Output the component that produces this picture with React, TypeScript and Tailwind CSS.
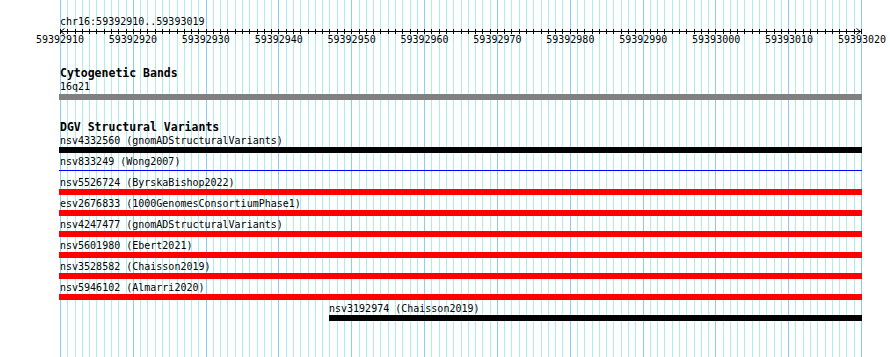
import React from "react";

// 110 bases between x=60 and x=861
const baseX = (i: number) => Math.round(60 + (i * 801) / 110);

const ticks = Array.from({ length: 111 }, (_, i) => i);
const labels = Array.from({ length: 12 }, (_, i) => String(59392910 + i * 10));

type Variant = { label: string; kind: "black" | "red" | "line"; late?: boolean };

const variants: Variant[] = [
  { label: "nsv4332560 (gnomADStructuralVariants)", kind: "black" },
  { label: "nsv833249 (Wong2007)", kind: "line" },
  { label: "nsv5526724 (ByrskaBishop2022)", kind: "red" },
  { label: "esv2676833 (1000GenomesConsortiumPhase1)", kind: "red" },
  { label: "nsv4247477 (gnomADStructuralVariants)", kind: "red" },
  { label: "nsv5601980 (Ebert2021)", kind: "red" },
  { label: "nsv3528582 (Chaisson2019)", kind: "red" },
  { label: "nsv5946102 (Almarri2020)", kind: "red" },
  { label: "nsv3192974 (Chaisson2019)", kind: "black", late: true },
];

function Grid() {
  return (
    <svg className="absolute inset-0" width={890} height={357}>
      {ticks.map((i) => (
        <line
          key={i}
          x1={baseX(i) + 0.5}
          x2={baseX(i) + 0.5}
          y1={0}
          y2={357}
          stroke={i % 10 === 0 ? "#87cefa" : "#afeeee"}
          strokeWidth={1}
        />
      ))}
    </svg>
  );
}

function Ruler() {
  return (
    <svg width={890} height={5} className="block overflow-visible">
      <line x1={60} x2={861} y1={3.5} y2={3.5} stroke="#000" />
      {ticks.map((i) => (
        <line key={i} x1={baseX(i) + 0.5} x2={baseX(i) + 0.5} y1={1} y2={6} stroke="#000" />
      ))}
      <polyline points="64.5,0.5 60.5,3.5 64.5,6.5" fill="none" stroke="#000" />
      <polyline points="856.5,0.5 860.5,3.5 856.5,6.5" fill="none" stroke="#000" />
    </svg>
  );
}

function Heading({ children }: { children: React.ReactNode }) {
  return <div className="ml-[60px] h-[12px] text-[11.5px] leading-[14px] font-bold">{children}</div>;
}

function VariantRow({ v }: { v: Variant }) {
  const pos = v.late ? "ml-[329px] w-[533px]" : "ml-[59px] w-[803px]";
  return (
    <div>
      <div className={`${v.late ? "ml-[329px]" : "ml-[60px]"} h-[15px] pt-[2px] leading-[13px] whitespace-pre`}>
        {v.label}
      </div>
      {v.kind === "line" ? (
        <div className={`${pos} h-[6px] pt-[2px]`}>
          <div className="h-[1px] bg-[#0000ff]" />
        </div>
      ) : (
        <div className={`${pos} relative h-[6px] ${v.kind === "red" ? "bg-[#ff0000]" : "bg-black"}`} />
      )}
    </div>
  );
}

export default function App() {
  return (
    <div className="relative w-[890px] h-[357px] overflow-hidden bg-white text-black font-['DejaVu_Sans_Mono',monospace] text-[10px]">
      <Grid />
      <div className="relative pt-[15px]">
        <div className="ml-[60px] leading-[13px]">chr16:59392910..59393019</div>
        <Ruler />
        <div className="ml-[35px] w-[852px] flex justify-between leading-[13px]">
          {labels.map((l) => (
            <span key={l} className="w-[50px] text-center">
              {l}
            </span>
          ))}
        </div>

        <div className="mt-[20px]">
          <Heading>Cytogenetic Bands</Heading>
          <div className="ml-[60px] mt-[2px] leading-[13px]">16q21</div>
          <div className="relative ml-[59px] mt-[1px] w-[803px] h-[6px] bg-[#808080]" />
        </div>

        <div className="mt-[20px]">
          <Heading>DGV Structural Variants</Heading>
          {variants.map((v) => (
            <VariantRow key={v.label} v={v} />
          ))}
        </div>
      </div>
    </div>
  );
}
